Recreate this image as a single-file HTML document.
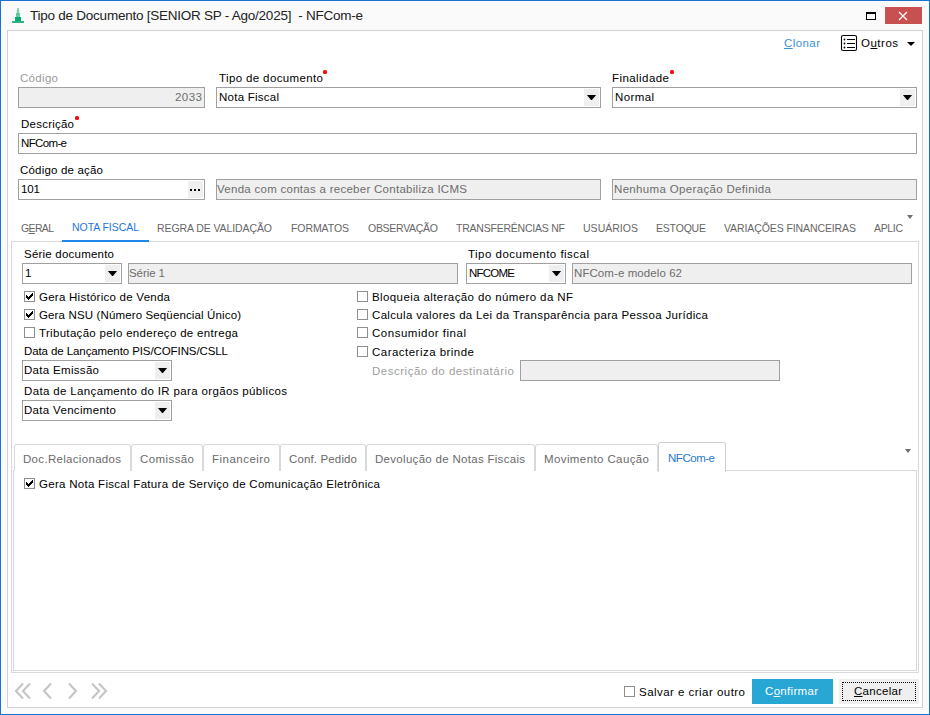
<!DOCTYPE html>
<html><head><meta charset="utf-8">
<style>
*{margin:0;padding:0;box-sizing:border-box}
html,body{width:930px;height:715px;overflow:hidden;background:#fafafa}
body{position:relative;font-family:"Liberation Sans",sans-serif;font-size:12px;color:#000}
.a{position:absolute}
.t{position:absolute;white-space:nowrap;line-height:14px;height:14px}
.win{position:absolute;left:0;top:0;width:930px;height:715px;border:1px solid #1971d0;background:#fafafa}
.panel{position:absolute;left:7px;top:30px;width:916px;height:678px;border:1px solid #d2d2d2;background:#fff}
.inp{position:absolute;border:1px solid #a0a0a0;background:#fff}
.dis{background:#efefef}
.dd{position:absolute;top:1px;right:1px;width:15px;height:17px;background:#efefef}
.dd:after{content:"";position:absolute;left:2.5px;top:5.6px;width:10px;height:5.8px;background:#000;clip-path:polygon(0 0,100% 0,50% 100%)}
.btn3{position:absolute;top:1px;right:1px;width:15px;height:17px;background:#efefef}
.btn3 i{position:absolute;top:8px;width:2px;height:2px;background:#000}
.req{position:absolute;width:4px;height:4px;border-radius:1.5px;background:#ff0808}
.cb{position:absolute;width:11px;height:11px;border:1px solid #8f8f8f;background:#fff}
.btab{position:absolute;top:444px;height:27px;border:1px solid #d9d9d9;border-bottom:none;border-radius:3px 3px 0 0;background:#fff}
.btab.act{border-color:#d0d0d0}
</style></head><body>
<div class="win"></div>
<!-- title icon -->
<svg class="a" style="left:11px;top:7px" width="14" height="17" viewBox="0 0 14 17">
<rect x="6" y="1" width="2" height="2" fill="#8dd6ba"/>
<rect x="6" y="3" width="2" height="3" fill="#79cfae"/>
<rect x="5.6" y="3" width="2.8" height="3" fill="#79cfae" opacity="0.5"/>
<rect x="5" y="6" width="4" height="4" fill="#66c8a3"/>
<rect x="4" y="10" width="6" height="5" fill="#08a978"/>
<rect x="1" y="14" width="12" height="2" fill="#2db385"/>
</svg>
<div class="a" style="left:866px;top:12px;width:10px;height:8px;border:1px solid #000;border-top-width:2px"></div>
<div class="a" style="left:885px;top:7px;width:37px;height:17px;background:#c75050"></div>
<svg class="a" style="left:897px;top:10px" width="13" height="12" viewBox="0 0 13 12"><path d="M2 2 L10 10 M10 2 L2 10" stroke="#fff" stroke-width="1.2"/></svg>

<div class="panel"></div>

<svg class="a" style="left:840px;top:34px" width="18" height="18" viewBox="0 0 18 18">
<rect x="1.5" y="1.5" width="15" height="15" rx="1.6" fill="none" stroke="#000" stroke-width="1.1"/>
<circle cx="4.5" cy="5.5" r="0.9" fill="#000"/><rect x="7" y="5" width="8" height="1" fill="#000"/>
<circle cx="4.5" cy="9.5" r="0.9" fill="#000"/><rect x="7" y="9" width="8" height="1" fill="#000"/>
<circle cx="4.5" cy="13.5" r="0.9" fill="#000"/><rect x="7" y="13" width="8" height="1" fill="#000"/>
</svg>
<div class="a" style="left:907px;top:42px;border-left:4px solid transparent;border-right:4px solid transparent;border-top:4px solid #000"></div>

<!-- upper tab strip -->
<div class="a" style="left:907px;top:215px;border-left:3.5px solid transparent;border-right:3.5px solid transparent;border-top:4px solid #6f6f6f"></div>
<div class="a" style="left:11px;top:241px;width:908px;height:432px;border:1px solid #d9d9d9;background:#fff"></div>
<div class="a" style="left:62px;top:240px;width:87px;height:2px;background:#1e88e8"></div>

<svg class="a" style="left:14px;top:682px" width="95" height="18" viewBox="0 0 95 18">
<g fill="none" stroke="#c6c6c6" stroke-width="2.2">
<path d="M9 1.5 L2 9 L9 16.5 M16 1.5 L9 9 L16 16.5"/>
<path d="M37 1.5 L30 9 L37 16.5"/>
<path d="M55 1.5 L62 9 L55 16.5"/>
<path d="M78 1.5 L85 9 L78 16.5 M85 1.5 L92 9 L85 16.5"/>
</g></svg>
<div class="t" style="left:30.00px;top:9px;font-size:13.5px;color:#222;letter-spacing:-0.243px;">Tipo de Documento [SENIOR SP - Ago/2025]&nbsp; - NFCom-e</div>
<div class="t" style="left:784.00px;top:36px;font-size:11.5px;color:#3b8fd6;letter-spacing:0.424px;"><span style="text-decoration:underline">C</span>lonar</div>
<div class="t" style="left:861.00px;top:36px;font-size:11.5px;letter-spacing:0.498px;">O<span style="text-decoration:underline">u</span>tros</div>
<div class="t" style="left:20.00px;top:71px;font-size:11.5px;color:#9a9a9a;letter-spacing:0.312px;">Código</div>
<div class="inp dis" style="left:18px;top:87px;width:187px;height:21px"></div>
<div class="t" style="left:175.00px;top:90px;font-size:11.5px;color:#6d6d6d;letter-spacing:0.473px;">2033</div>
<div class="t" style="left:219.00px;top:71px;font-size:11.5px;letter-spacing:0.373px;">Tipo de documento</div>
<div class="req" style="left:323px;top:70px"></div>
<div class="inp" style="left:216px;top:87px;width:385px;height:21px"><div class="dd"></div></div>
<div class="t" style="left:219.00px;top:90px;font-size:11.5px;letter-spacing:0.248px;">Nota Fiscal</div>
<div class="t" style="left:612.00px;top:71px;font-size:11.5px;letter-spacing:0.438px;">Finalidade</div>
<div class="req" style="left:670px;top:70px"></div>
<div class="inp" style="left:612px;top:87px;width:305px;height:21px"><div class="dd"></div></div>
<div class="t" style="left:615.00px;top:90px;font-size:11.5px;letter-spacing:0.388px;">Normal</div>
<div class="t" style="left:21.00px;top:117px;font-size:11.5px;letter-spacing:0.234px;">Descrição</div>
<div class="req" style="left:75px;top:116px"></div>
<div class="inp" style="left:18px;top:133px;width:899px;height:21px"></div>
<div class="t" style="left:21.00px;top:136px;font-size:11.5px;letter-spacing:-0.640px;">NFCom-e</div>
<div class="t" style="left:20.00px;top:163px;font-size:11.5px;letter-spacing:0.188px;">Código de ação</div>
<div class="inp" style="left:18px;top:179px;width:187px;height:21px"><div class="btn3"><i style="left:2px"></i><i style="left:6px"></i><i style="left:10px"></i></div></div>
<div class="t" style="left:21.00px;top:182px;font-size:11.5px;letter-spacing:-0.095px;">101</div>
<div class="inp dis" style="left:216px;top:179px;width:385px;height:21px"></div>
<div class="t" style="left:217.00px;top:182px;font-size:11.5px;color:#6d6d6d;letter-spacing:0.275px;">Venda com contas a receber Contabiliza ICMS</div>
<div class="inp dis" style="left:612px;top:179px;width:305px;height:21px"></div>
<div class="t" style="left:614.00px;top:182px;font-size:11.5px;color:#6d6d6d;letter-spacing:0.335px;">Nenhuma Operação Definida</div>
<div class="t" style="left:21.00px;top:221px;font-size:10.5px;color:#666666;letter-spacing:-0.650px;">G<span style="text-decoration:underline">E</span>RAL</div>
<div class="t" style="left:72.00px;top:220px;font-size:10.5px;color:#1f78d1;letter-spacing:-0.049px;">NOTA FISCAL</div>
<div class="t" style="left:157.00px;top:221px;font-size:10.5px;color:#666666;letter-spacing:-0.089px;">REGRA DE VALIDAÇÃO</div>
<div class="t" style="left:291.00px;top:221px;font-size:10.5px;color:#666666;letter-spacing:-0.076px;">FORMATOS</div>
<div class="t" style="left:368.00px;top:221px;font-size:10.5px;color:#666666;letter-spacing:-0.283px;">OBSERVAÇÃO</div>
<div class="t" style="left:456.00px;top:221px;font-size:10.5px;color:#666666;letter-spacing:-0.224px;">TRANSFERÊNCIAS NF</div>
<div class="t" style="left:583.00px;top:221px;font-size:10.5px;color:#666666;letter-spacing:0.023px;">USUÁRIOS</div>
<div class="t" style="left:656.00px;top:221px;font-size:10.5px;color:#666666;letter-spacing:-0.192px;">ESTOQUE</div>
<div class="t" style="left:724.00px;top:221px;font-size:10.5px;color:#666666;letter-spacing:-0.100px;">VARIAÇÕES FINANCEIRAS</div>
<div class="t" style="left:874.00px;top:221px;font-size:10.5px;color:#666666;letter-spacing:-0.338px;">APLIC</div>
<div class="t" style="left:24.00px;top:247px;font-size:11.5px;letter-spacing:0.219px;">Série documento</div>
<div class="inp" style="left:22px;top:263px;width:100px;height:21px"><div class="dd"></div></div>
<div class="t" style="left:25.00px;top:266px;font-size:11.5px;">1</div>
<div class="inp dis" style="left:128px;top:263px;width:330px;height:21px"></div>
<div class="t" style="left:129.00px;top:266px;font-size:11.5px;color:#6d6d6d;letter-spacing:-0.073px;">Série 1</div>
<div class="t" style="left:468.00px;top:247px;font-size:11.5px;letter-spacing:0.478px;">Tipo documento fiscal</div>
<div class="inp" style="left:466px;top:263px;width:100px;height:21px"><div class="dd"></div></div>
<div class="t" style="left:469.00px;top:266px;font-size:11.5px;letter-spacing:-0.766px;">NFCOME</div>
<div class="inp dis" style="left:572px;top:263px;width:340px;height:21px"></div>
<div class="t" style="left:574.00px;top:266px;font-size:11.5px;color:#6d6d6d;letter-spacing:0.079px;">NFCom-e modelo 62</div>
<div class="cb" style="left:24px;top:291px"><svg width="11" height="11" viewBox="0 0 11 11" style="position:absolute;left:-1px;top:-1px"><g fill="#000"><rect x="2" y="4" width="1" height="3"/><rect x="3" y="5" width="1" height="3"/><rect x="4" y="6" width="1" height="3"/><rect x="5" y="5" width="1" height="3"/><rect x="6" y="4" width="1" height="3"/><rect x="7" y="3" width="1" height="3"/><rect x="8" y="2" width="1" height="3"/></g></svg></div>
<div class="t" style="left:39.00px;top:290px;font-size:11.5px;letter-spacing:0.259px;">Gera Histórico de Venda</div>
<div class="cb" style="left:24px;top:309px"><svg width="11" height="11" viewBox="0 0 11 11" style="position:absolute;left:-1px;top:-1px"><g fill="#000"><rect x="2" y="4" width="1" height="3"/><rect x="3" y="5" width="1" height="3"/><rect x="4" y="6" width="1" height="3"/><rect x="5" y="5" width="1" height="3"/><rect x="6" y="4" width="1" height="3"/><rect x="7" y="3" width="1" height="3"/><rect x="8" y="2" width="1" height="3"/></g></svg></div>
<div class="t" style="left:39.00px;top:308px;font-size:11.5px;letter-spacing:0.137px;">Gera NSU (Número Seqüencial Único)</div>
<div class="cb" style="left:24px;top:327px"></div>
<div class="t" style="left:39.00px;top:326px;font-size:11.5px;letter-spacing:0.318px;">Tributação pelo endereço de entrega</div>
<div class="t" style="left:24.00px;top:344px;font-size:11.5px;letter-spacing:-0.094px;">Data de Lançamento PIS/COFINS/CSLL</div>
<div class="inp" style="left:22px;top:360px;width:150px;height:21px"><div class="dd"></div></div>
<div class="t" style="left:24.00px;top:363px;font-size:11.5px;letter-spacing:0.311px;">Data Emissão</div>
<div class="t" style="left:24.00px;top:384px;font-size:11.5px;letter-spacing:0.354px;">Data de Lançamento do IR para orgãos públicos</div>
<div class="inp" style="left:22px;top:400px;width:150px;height:21px"><div class="dd"></div></div>
<div class="t" style="left:24.00px;top:403px;font-size:11.5px;letter-spacing:0.316px;">Data Vencimento</div>
<div class="cb" style="left:357px;top:291px"></div>
<div class="t" style="left:372.00px;top:290px;font-size:11.5px;letter-spacing:0.395px;">Bloqueia alteração do número da NF</div>
<div class="cb" style="left:357px;top:309px"></div>
<div class="t" style="left:372.00px;top:308px;font-size:11.5px;letter-spacing:0.332px;">Calcula valores da Lei da Transparência para Pessoa Jurídica</div>
<div class="cb" style="left:357px;top:327px"></div>
<div class="t" style="left:372.00px;top:326px;font-size:11.5px;letter-spacing:0.514px;">Consumidor final</div>
<div class="cb" style="left:357px;top:346px"></div>
<div class="t" style="left:372.00px;top:345px;font-size:11.5px;letter-spacing:0.473px;">Caracteriza brinde</div>
<div class="t" style="left:372.00px;top:364px;font-size:11.5px;color:#a0a0a0;letter-spacing:0.510px;">Descrição do destinatário</div>
<div class="inp dis" style="left:520px;top:360px;width:260px;height:21px"></div>
<div class="a" style="left:13px;top:470px;width:904px;height:201px;border:1px solid #d9d9d9;background:#fff"></div>
<div class="btab" style="left:14px;width:117px"></div>
<div class="t" style="left:23.00px;top:452px;font-size:11.5px;color:#6a6a6a;letter-spacing:0.311px;">Doc.Relacionados</div>
<div class="btab" style="left:131px;width:72px"></div>
<div class="t" style="left:140.00px;top:452px;font-size:11.5px;color:#6a6a6a;letter-spacing:0.410px;">Comissão</div>
<div class="btab" style="left:203px;width:77px"></div>
<div class="t" style="left:212.00px;top:452px;font-size:11.5px;color:#6a6a6a;letter-spacing:0.479px;">Financeiro</div>
<div class="btab" style="left:280px;width:86px"></div>
<div class="t" style="left:289.00px;top:452px;font-size:11.5px;color:#6a6a6a;letter-spacing:0.137px;">Conf. Pedido</div>
<div class="btab" style="left:366px;width:169px"></div>
<div class="t" style="left:375.00px;top:452px;font-size:11.5px;color:#6a6a6a;letter-spacing:0.298px;">Devolução de Notas Fiscais</div>
<div class="btab" style="left:535px;width:123px"></div>
<div class="t" style="left:544.00px;top:452px;font-size:11.5px;color:#6a6a6a;letter-spacing:0.395px;">Movimento Caução</div>
<div class="btab act" style="left:658px;width:68px;top:442px;height:30px"></div>
<div class="t" style="left:668.00px;top:451px;font-size:11.5px;color:#1f78d1;letter-spacing:-0.473px;">NFCom-e</div>
<div class="a" style="left:905px;top:449px;border-left:3.5px solid transparent;border-right:3.5px solid transparent;border-top:4px solid #6f6f6f"></div>
<div class="cb" style="left:24px;top:478px"><svg width="11" height="11" viewBox="0 0 11 11" style="position:absolute;left:-1px;top:-1px"><g fill="#000"><rect x="2" y="4" width="1" height="3"/><rect x="3" y="5" width="1" height="3"/><rect x="4" y="6" width="1" height="3"/><rect x="5" y="5" width="1" height="3"/><rect x="6" y="4" width="1" height="3"/><rect x="7" y="3" width="1" height="3"/><rect x="8" y="2" width="1" height="3"/></g></svg></div>
<div class="t" style="left:39.00px;top:477px;font-size:11.5px;letter-spacing:0.287px;">Gera Nota Fiscal Fatura de Serviço de Comunicação Eletrônica</div>
<div class="cb" style="left:624px;top:686px"></div>
<div class="t" style="left:639.00px;top:685px;font-size:11.5px;letter-spacing:0.466px;">Salvar e criar outro</div>
<div class="a" style="left:752px;top:679px;width:81px;height:25px;background:#28a6d4"></div>
<div class="t" style="left:765.00px;top:684px;font-size:11.5px;color:#fff;letter-spacing:0.315px;">C<span style="text-decoration:underline">o</span>nfirmar</div>
<div class="a" style="left:839px;top:679px;width:80px;height:25px;background:#efefef"></div>
<div class="a" style="left:842px;top:682px;width:74px;height:19px;border:1px dotted #000"></div>
<div class="t" style="left:854.00px;top:684px;font-size:11.5px;letter-spacing:0.283px;"><span style="text-decoration:underline">C</span>ancelar</div>
</body></html>
